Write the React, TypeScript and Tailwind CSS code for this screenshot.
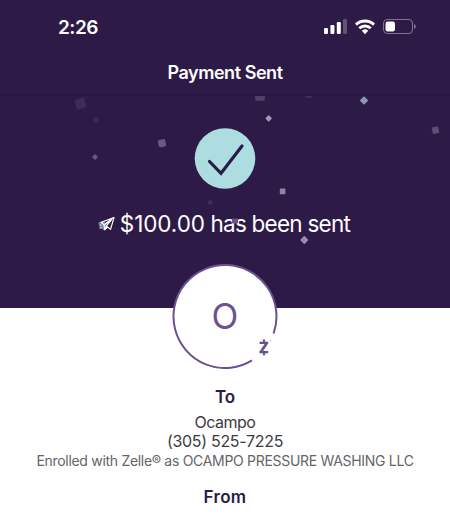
const confetti = [
  { x: 80.5, y: 103.5, w: 10, h: 10, r: -14, fill: "#3f2b56" },
  { x: 96, y: 120, w: 6, h: 6, r: 0, fill: "#38244f" },
  { x: 95, y: 157, w: 4.5, h: 4.5, r: 45, fill: "#6b5483" },
  { x: 162, y: 143.2, w: 7.4, h: 7.4, r: -12, fill: "#6d5786" },
  { x: 260, y: 98, w: 9.5, h: 5.5, r: 0, fill: "#564069" },
  { x: 308.5, y: 96.7, w: 7, h: 2, r: 0, fill: "#412c5c" },
  { x: 364, y: 100.5, w: 6.2, h: 6.2, r: 45, fill: "#8899b3" },
  { x: 268.7, y: 118.4, w: 4.8, h: 4.8, r: 45, fill: "#a795b7" },
  { x: 435.5, y: 130.2, w: 6.6, h: 6.6, r: -12, fill: "#5a5075" },
  { x: 282.6, y: 191.4, w: 5.6, h: 5.6, r: 0, fill: "#93819d" },
  { x: 210.2, y: 202.5, w: 4.4, h: 4.4, r: 45, fill: "#402b64" },
  { x: 304.3, y: 240, w: 6, h: 6, r: 45, fill: "#9b8ab2" },
  { x: 235, y: 221, w: 6, h: 5, r: 0, fill: "#6a5580" },
];

function Confetti() {
  return (
    <svg className="absolute left-0 top-0 pointer-events-none" width="450" height="212" viewBox="0 96 450 212">
      {confetti.map((c) => (
        <rect
          key={`${c.x}-${c.y}`}
          x={c.x - c.w / 2}
          y={c.y - c.h / 2}
          width={c.w}
          height={c.h}
          rx={c.w > 7 && c.h > 7 ? 1.8 : 0.8}
          fill={c.fill}
          transform={`rotate(${c.r} ${c.x} ${c.y})`}
        />
      ))}
    </svg>
  );
}

function StatusIcons() {
  return (
    <svg width="96" height="20" viewBox="322 17 96 20" fill="#fff" aria-hidden="true">
      {/* Signal */}
      <rect x="324" y="28" width="4" height="6" rx="1.2" />
      <rect x="330.4" y="25" width="4" height="9" rx="1.2" />
      <rect x="336.8" y="22" width="4" height="12" rx="1.2" />
      <rect x="343" y="19" width="4" height="15" rx="1.2" opacity="0.25" />
      {/* Wi-Fi */}
      <g fill="none" stroke="#fff" strokeWidth="2.9">
        <path d="M356 24.6a13 13 0 0 1 18 0" />
        <path d="M359.3 28.2a8.4 8.4 0 0 1 11.4 0" />
      </g>
      <path d="M361.8 30.8a4.8 4.8 0 0 1 6.4 0L365 34.2z" />
      {/* Battery */}
      <rect x="383.5" y="19.5" width="29" height="14" rx="4.2" fill="none" stroke="#81738f" strokeWidth="1.1" />
      <path d="M414 24v5c1.1-.4 1.8-1.3 1.8-2.5s-.7-2.1-1.8-2.5z" fill="#81738f" />
      <rect x="385.5" y="21.5" width="9.5" height="10" rx="2.2" />
    </svg>
  );
}

function PlaneIcon() {
  return (
    <svg width="18" height="16" viewBox="98 216 18 16" fill="none" stroke="#fff" strokeWidth="1.2" strokeLinejoin="round" aria-hidden="true">
      <path d="M98.3 222.2l6-.9 2.7 6.7-3.3 2-4-2z" fill="#75839f" stroke="none" />
      <path d="M114 217.6l-12.8 4.7 2.8 2.4 7.2-4.5-5 5.8 4.3 3.3z" />
      <path d="M114 217.6l-10 7.1.6 5 1.9-3.6M104.6 229.7l2.8-2.5" />
      <path d="M99.8 224.6l1.6.8M99.6 228.5l2.2-1.2" strokeWidth="0.8" />
    </svg>
  );
}

function Avatar() {
  return (
    <div className="relative flex h-[106px] w-[106px] items-center justify-center">
      <svg className="absolute inset-0" width="106" height="106" viewBox="172 263 106 106" aria-hidden="true">
        <circle cx="225" cy="316.5" r="51.5" fill="#fff" />
        <path d="M252 360.35A51.5 51.5 0 1 1 273.6 333.5" fill="none" stroke="#6b5192" strokeWidth="2" />
        <g fill="none" stroke="#6b5192" strokeWidth="2.2">
          <path d="M259.6 342.9h8.6M259.4 352.1h8.8" />
          <path d="M266.7 343.2l-5.7 8.6" strokeWidth="2.7" />
          <path d="M264 339.5v3.2M264 352v3.2" />
        </g>
        <circle cx="270.5" cy="340.7" r="0.7" fill="#b9abc9" />
      </svg>
      <span className="relative text-[35px] leading-none text-[#6b5192]">O</span>
    </div>
  );
}

export default function App() {
  return (
    <div className="relative flex h-[515px] w-[450px] flex-col overflow-hidden bg-white font-['Inter',sans-serif]">
      <header className="h-24 shrink-0 border-b border-[#291740] bg-[#2e1a47] text-white">
        <div className="flex h-[54px] items-center justify-between pl-[58px] pr-8">
          <span className="text-[19px] font-semibold leading-none tracking-[-0.5px]">2:26</span>
          <StatusIcons />
        </div>
        <h1 className="text-center text-[18px] font-semibold leading-[37px] tracking-[-0.45px]">Payment Sent</h1>
      </header>

      <section className="relative flex h-[212px] shrink-0 flex-col items-center bg-[#2e1a47] pt-8">
        <svg width="62" height="62" viewBox="194 128 62 62" fill="none" aria-hidden="true">
          <circle cx="225" cy="158.5" r="30.3" fill="#addde0" />
          <path d="M209.5 161.5L221 173.3L242 146" stroke="#2b1b47" strokeWidth="3.2" strokeLinecap="round" />
        </svg>
        <div className="mr-0.5 mt-[18px] flex items-center gap-1 whitespace-nowrap text-white">
          <PlaneIcon />
          <span className="text-[22.5px] leading-8 tracking-[-0.75px]">
            <span className="tracking-[-0.1px]">$100.00</span> has been sent
          </span>
        </div>
        <Confetti />
      </section>

      <main className="-mt-[45px] flex flex-col items-center whitespace-nowrap">
        <Avatar />
        <h2 className="mt-4 text-[17px] font-semibold leading-6 text-[#2e1a47]">To</h2>
        <p className="mt-1 text-[16px] leading-[19px] tracking-[-0.5px] text-[#3d3b40]">Ocampo</p>
        <p className="text-[16px] leading-[19px] tracking-[-0.3px] text-[#3d3b40]">(305) 525-7225</p>
        <p className="text-[14px] leading-5 tracking-[-0.3px] text-[#666468]">Enrolled with Zelle® as OCAMPO PRESSURE WASHING LLC</p>
        <h2 className="mt-[14px] text-[17px] font-semibold leading-6 tracking-[0.3px] text-[#2e1a47]">From</h2>
      </main>
    </div>
  );
}
